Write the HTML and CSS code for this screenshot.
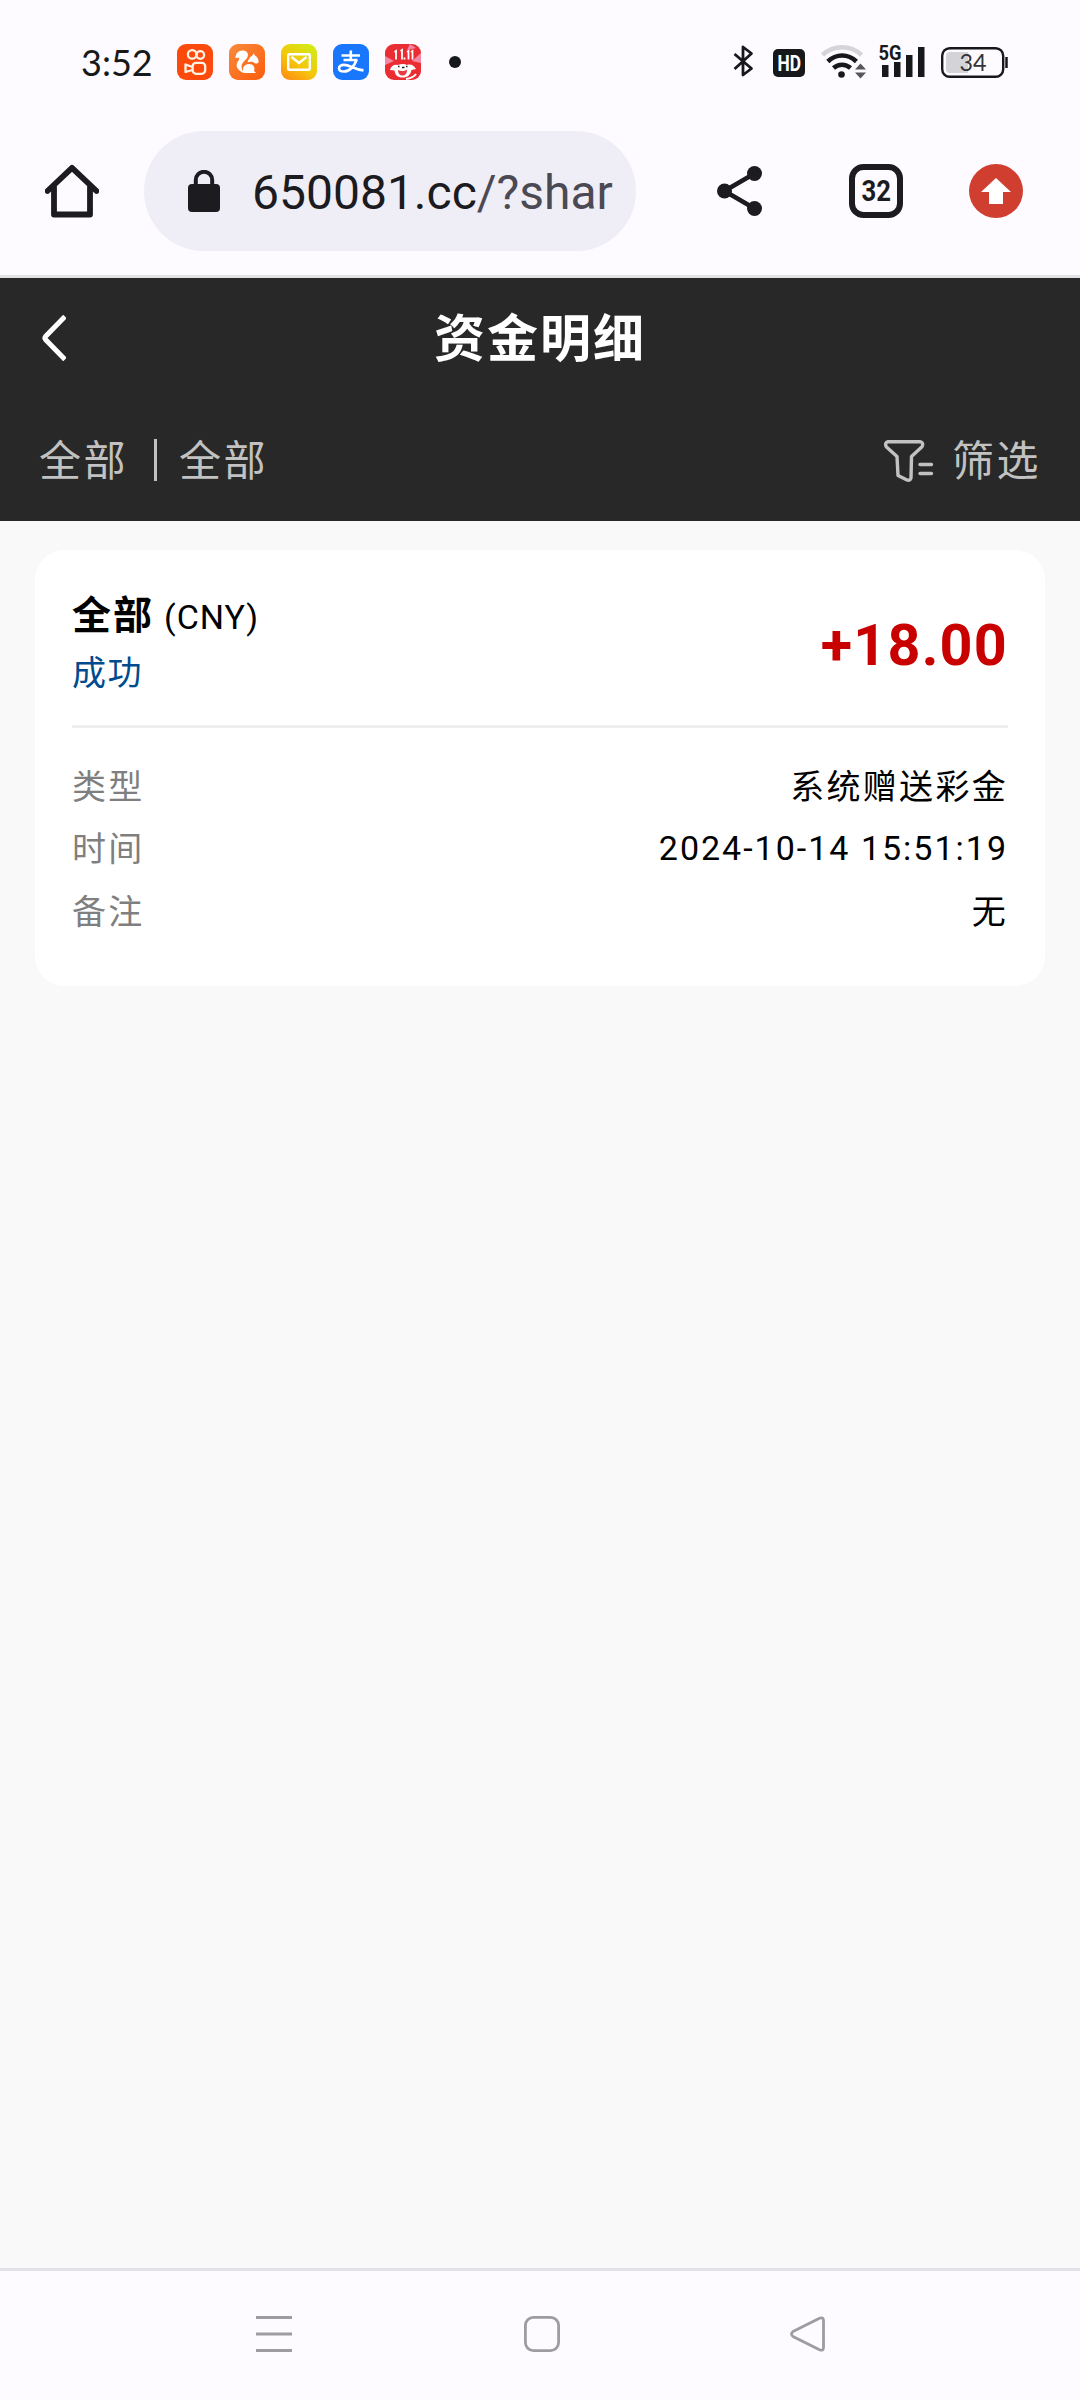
FILE: index.html
```html
<!DOCTYPE html>
<html lang="zh-CN">
<head>
<meta charset="utf-8">
<title>资金明细</title>
<link rel="stylesheet" href="styles.css">
</head>
<body>
<div class="screen">
  <div class="status-bar">
    <span class="clock">3:52</span>
    <div class="notifications">
      <svg class="app-icon" viewBox="0 0 36 36"><rect width="36" height="36" rx="9" fill="#fb4a0b"/><g fill="none" stroke="#fff3e6" stroke-width="2.3"><circle cx="15.2" cy="10.4" r="4.3"/><circle cx="23.3" cy="11" r="3.8"/><rect x="15.6" y="18.800" width="12.6" height="11" rx="3.5"/><path d="M15.500 23L8.500 20.500v7.500L15.500 26" stroke-linejoin="round"/></g></svg>
      <svg class="app-icon" viewBox="0 0 36 36"><defs><linearGradient id="orange" x1="0" y1="0" x2="1" y2="1"><stop stop-color="#f98b3d"/><stop offset="1" stop-color="#fc5c0a"/></linearGradient></defs><rect width="36" height="36" rx="9" fill="url(#orange)"/><path fill="#fff" d="M6.500 14C6.500 9 10 6 14.500 6.600c3.500.4 5.500 3.400 4 6.400-1.500 3.500-5.500 5-6 9 0 2.500 1 4.500 2 7C9 26.500 6 22.500 8.500 18c1-1.500 2.500-3 1.500-4-1-.5-2.500.2-3.500 0z"/><path fill="#fff" d="M18.500 18.500c1-3.500 3-6 5.500-7.500l.8-2 1 2.500c3 1 3.500 4.500 4 6-.5 2-2.500 2.300-4 1.800-2-2-5-1.800-7.300-.8z"/><path fill="#fff" d="M14 28.500c-1-4.500 1.500-8.500 6-8.500 4.500 0 6.500 3.500 5 7l2 2H15.500z"/></svg>
      <svg class="app-icon" viewBox="0 0 36 36"><defs><linearGradient id="lime" x1=".1" y1="1" x2=".8" y2="0"><stop stop-color="#ff8a12"/><stop offset=".45" stop-color="#f5c50c"/><stop offset="1" stop-color="#d2eb14"/></linearGradient></defs><rect width="36" height="36" rx="9" fill="url(#lime)"/><g fill="none" stroke="#fff" stroke-width="2.4"><rect x="7.200" y="10.200" width="21.600" height="15.600" rx="1"/><path d="M10.500 13l7.500 6 7.500-6"/></g></svg>
      <svg class="app-icon" viewBox="0 0 36 36"><rect width="36" height="36" rx="9" fill="#1977fe"/><g fill="none" stroke="#fff" stroke-width="2.600"><path d="M8.500 11.500h18.500M17.800 6.500v9.500M10.500 16h14"/><path d="M23.500 16c-2 6-7 11.500-12.500 11.500-3.500 0-5-1.500-5-3.300s2-3.300 5-3.300c6 0 9.500 4.500 19.500 5.500"/></g></svg>
      <svg class="app-icon" viewBox="0 0 36 36"><rect width="36" height="36" rx="9" fill="#ea2d33"/><path d="M0 12l9 5-9 4zM36 9l-9 8 9 2zM25 0l-3 6 9-2z" fill="#f487a5"/><path d="M9.500 8l1.500-1v8.500M15.500 7l1.500-1v9.500M22 8l1.500-1v8.500M26 8l1.500-1v8.500M19.500 13.500v2" fill="none" stroke="#fff" stroke-width="1.800"/><path d="M5 26c1-4 4-6 8-5 3-1.500 7-1.500 9 0 4-1.500 7 .5 9 4l-4.500 1c-1 5-4 7.500-9 7.500s-7.500-2.500-8-7z" fill="#fff"/><path d="M13 26c3 1.500 6 1.500 9-.5 0 4-1.500 6-4.500 6S13 29.500 13 26z" fill="#e83a40"/><path d="M13 22.500h1.500M21 22.500h1.500M17 23.500h2.500" stroke="#222" stroke-width="1.500"/><path d="M21 35q7-1 10-5" stroke="#fff" stroke-width="2" fill="none"/></svg>
      <i class="more-dot"></i>
    </div>
    <svg class="system-icons" width="278" height="40" viewBox="0 -2 278 40">
      <path d="M4.500 11l17 14.500-8.500 6.500V4l8.500 6.500L4.500 26" stroke="#17181a" stroke-width="2.800" fill="none" stroke-linejoin="round"/>
      <rect x="43" y="6" width="32" height="28" rx="5" fill="#17181a"/>
      <text x="47.500" y="28" class="hd" textLength="23.500" lengthAdjust="spacingAndGlyphs">HD</text>
      <g fill="none" stroke-width="4.500"><path d="M92.500 12c11-10.300 28-10.300 39 0" stroke="#d5d4d8"/><path d="M97.800 18.500c8.400-8 20.200-8 28.600 0M103.500 25c5-4.500 12-4.500 17 0" stroke="#17181a"/></g>
      <circle cx="111.500" cy="31.500" r="3.300" fill="#17181a"/><path d="M125 26.500h11l-5.500-6zM125 29.500h11l-5.500 6z" fill="#55555a"/>
      <text x="148.500" y="17" class="gen" textLength="23" lengthAdjust="spacingAndGlyphs">5G</text>
      <path d="M152 22h6.500v12H152zM164 19h6.500v15H164zM176 12h6.500v22H176zM188 4h6.500v30H188z" fill="#17181a"/>
      <rect x="212.200" y="5.200" width="61" height="28.600" rx="7.500" fill="none" stroke="#17181a" stroke-width="2.400"/><path d="M220 9h18v21h-18q-4 0-4-4V13q0-4 4-4z" fill="#d4d3d7"/><path d="M276.500 14v11" stroke="#17181a" stroke-width="2.500"/>
      <text x="229.500" y="28" class="battery" textLength="27" lengthAdjust="spacingAndGlyphs">34</text>
    </svg>
  </div>
  <div class="browser-bar">
    <svg class="home" width="54" height="54" viewBox="0 0 54 54"><path d="M2.500 27L27 3.800 51.500 27M9 23v27.500h36V23" fill="none" stroke="#1b1b20" stroke-width="5.800" stroke-linecap="round" stroke-linejoin="round"/></svg>
    <div class="address">
      <svg width="32" height="42" viewBox="0 0 32 42"><rect y="14" width="32" height="28" rx="4" fill="#1b1b20"/><path d="M7.800 16V10a8.200 8.200 0 0 1 16.400 0v6" fill="none" stroke="#1b1b20" stroke-width="4"/></svg>
      <span class="url">650081.cc<span class="path">/?shar</span></span>
    </div>
    <svg class="share" width="45" height="50" viewBox="0 0 45 50"><path d="M37.500 7.500l-30 17.500 30 17.500" fill="none" stroke="#1b1b20" stroke-width="4.600"/><g fill="#1b1b20"><circle cx="7.500" cy="25" r="7.500"/><circle cx="37.500" cy="7.500" r="7.500"/><circle cx="37.500" cy="42.500" r="7.500"/></g></svg>
    <svg class="tabs" width="54" height="54" viewBox="0 0 54 54"><rect x="3" y="3" width="48" height="48" rx="11.500" fill="none" stroke="#1b1b20" stroke-width="6"/><text x="12.500" y="37" class="tab-count" textLength="29.500" lengthAdjust="spacingAndGlyphs">32</text></svg>
    <svg class="update" width="54" height="54" viewBox="0 0 54 54"><circle cx="27" cy="27" r="27" fill="#d03e30"/><path d="M27 14l15 14h-8v12H20V28h-8z" fill="#fff"/></svg>
  </div>
  <header class="page-header">
    <div class="title-row">
      <svg class="back" width="24" height="46" viewBox="0 0 24 46"><path d="M23 1.500L3.500 21.500q-1.200 1.500 0 3L23 44.500" fill="none" stroke="#fff" stroke-width="5"/></svg>
      <h1>资金明细</h1>
    </div>
    <div class="filter-row">
      <span>全部</span><i class="bar"></i><span>全部</span>
      <div class="filter">
        <svg width="50" height="44" viewBox="0 0 50 44"><g fill="none" stroke="#c2c2c2" stroke-width="3.400" stroke-linejoin="round" stroke-linecap="round"><path d="M4 2.700h32q4 1 2 5L27.500 17.500 27 39q-1 3-4 2L14 36.500l-1-19L2.500 8Q0 4 4 2.700z"/><path d="M36 25.500h11.500M36 34.500h11.500"/></g></svg>
        <span>筛选</span>
      </div>
    </div>
  </header>
  <main class="content">
    <section class="card">
      <div class="summary">
        <div>
          <div class="kind"><b>全部</b><span>(CNY)</span></div>
          <div class="state">成功</div>
        </div>
        <div class="amount">+18.00</div>
      </div>
      <dl class="details">
        <div class="row"><dt>类型</dt><dd>系统赠送彩金</dd></div>
        <div class="row"><dt>时间</dt><dd class="date">2024-10-14 15:51:19</dd></div>
        <div class="row"><dt>备注</dt><dd>无</dd></div>
      </dl>
    </section>
  </main>
  <nav class="system-nav">
    <svg width="36" height="36" viewBox="0 0 36 36"><path d="M0 1.500h36M0 18h36M0 34.500h36" stroke="#9d9ca0" stroke-width="3"/></svg>
    <svg class="nav-home" width="36" height="36" viewBox="0 0 36 36"><rect x="1.400" y="1.400" width="33.200" height="33.200" rx="8" fill="none" stroke="#9d9ca0" stroke-width="2.800"/></svg>
    <svg width="36" height="36" viewBox="0 0 36 36"><path d="M3 15.500L29.500 2.300q4-1.500 4 2.200v27q0 3.700-4 2.200L3 20.500q-3-2.500 0-5z" fill="none" stroke="#9d9ca0" stroke-width="2.800"/></svg>
  </nav>
</div>
</body>
</html>
```
FILE: styles.css
```css
* { box-sizing: border-box; }
body, h1, dl, dd { margin: 0; }
svg { display: block; flex: none; }
.screen {
  width: 1080px;
  height: 2400px;
  display: flex;
  flex-direction: column;
  background: #f9f9f9;
  font-family: Roboto, "Noto Sans CJK SC", sans-serif;
}
.status-bar {
  height: 107px;
  padding: 36px 72px 0 81px;
  display: flex;
  align-items: flex-start;
  background: #fdfbff;
}
.clock {
  width: 96px;
  padding-top: 6px;
  font: 36px/40px Lato, sans-serif;
  color: #17181a;
}
.notifications { display: flex; gap: 16px; padding-top: 8px; align-items: center; }
.app-icon { width: 36px; height: 36px; }
.more-dot { width: 12px; height: 12px; margin-left: 12px; border-radius: 50%; background: #17181a; }
.system-icons { margin: 5px 0 0 auto; }
.hd { font: 700 22px Roboto, sans-serif; fill: #fff; }
.gen { font: 700 20px Roboto, sans-serif; fill: #17181a; }
.battery { font: 24px Lato, sans-serif; fill: #333338; }
.browser-bar {
  height: 171px;
  padding: 0 57px 1px 45px;
  border-bottom: 3px solid #e3e3e5;
  display: flex;
  align-items: center;
  background: #fdfbff;
}
.address {
  width: 492px;
  height: 120px;
  margin-left: 45px;
  padding-left: 44px;
  display: flex;
  align-items: center;
  gap: 32px;
  border-radius: 60px;
  background: #efedf6;
}
.url { padding-top: 4px; font-size: 48px; line-height: 60px; color: #1b1b20; white-space: nowrap; }
.path { color: #4b4a54; }
.share { margin-left: 81px; }
.tabs { margin-left: 87px; }
.tab-count { font: 700 30px Roboto, sans-serif; fill: #1b1b20; }
.update { margin-left: 66px; }
.page-header { height: 243px; background: #282828; }
.title-row { height: 120px; display: grid; grid-template-columns: 120px 1fr 120px; align-items: center; }
.back { margin-left: 42px; }
h1 { padding-top: 3px; font-size: 51px; line-height: 70px; letter-spacing: 2px; text-align: center; color: #fff; }
.filter-row {
  height: 123px;
  padding: 0 39px;
  display: flex;
  align-items: center;
  font-size: 42px;
  line-height: 60px;
  letter-spacing: 2.500px;
  color: #c2c2c2;
}
.filter-row span { padding-top: 5px; }
.bar { width: 3px; height: 42px; margin: 1px 22px 0 26px; background: #c2c2c2; }
.filter { margin-left: auto; display: flex; align-items: center; gap: 18px; }
.filter svg { margin-top: 3px; }
.content { flex: 1; padding: 29px 35px; }
.card { height: 436px; padding: 0 37px; border-radius: 30px; background: #fff; color: #000; letter-spacing: 2px; }
.summary {
  height: 178px;
  border-bottom: 3px solid #eee;
  display: flex;
  justify-content: space-between;
  padding-top: 38px;
}
.kind { height: 57px; display: flex; align-items: baseline; gap: 10px; font-size: 34px; line-height: 56px; letter-spacing: 1px; }
.kind b { font-size: 39px; letter-spacing: 2px; }
.state { font-size: 34px; line-height: 56px; letter-spacing: 1.500px; color: #004b8d; }
.amount { padding-top: 23px; font-size: 57.500px; line-height: 70px; font-weight: 700; letter-spacing: 1.200px; color: #c90000; }
.details { padding-top: 28px; font-size: 34px; line-height: 62.400px; letter-spacing: 2.300px; }
.row { display: flex; justify-content: space-between; height: 62.400px; }
.date { margin-top: -1px; letter-spacing: 2px; }
dt { color: #7f7f7f; }
.system-nav {
  height: 132px;
  border-top: 3px solid #e1e2e7;
  padding: 45px 254px 0 256px;
  display: flex;
  justify-content: space-between;
  background: #fdfbff;
}
.nav-home { margin-left: 2px; }
```
